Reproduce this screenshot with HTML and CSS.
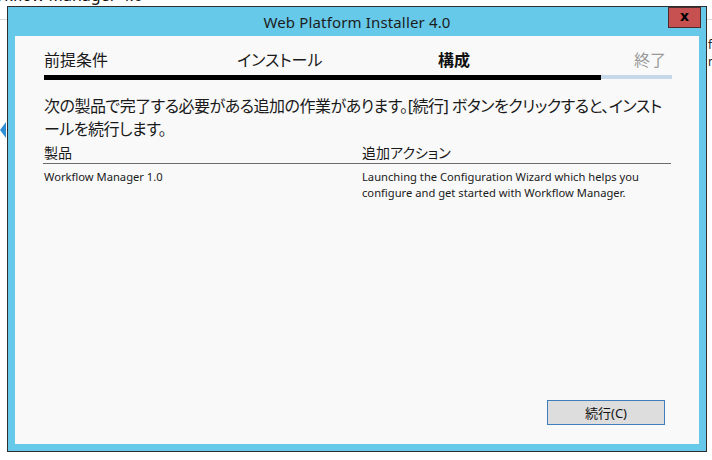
FILE: index.html
```html
<!DOCTYPE html>
<html lang="ja">
<head>
<meta charset="utf-8">
<title>Web Platform Installer 4.0</title>
<link rel="stylesheet" href="styles.css">
</head>
<body>
<div class="desktop">
  <div class="bg-rule"></div>
  <div class="bg-title">Workflow Manager 4.0</div>
  <div class="bg-side"><span>fl</span><span>m</span></div>
  <div class="bg-arrow"></div>

  <div class="window">
    <div class="titlebar">
      <span class="title">Web Platform Installer 4.0</span>
      <button class="close" type="button">x</button>
    </div>
    <div class="panel">
      <div class="steps">
        <div class="step-labels">
          <span>前提条件</span>
          <span>インストール</span>
          <span class="current">構成</span>
          <span class="todo">終了</span>
        </div>
        <div class="progress">
          <div class="done"></div>
          <div class="rest"></div>
        </div>
      </div>

      <p class="message">次の製品で完了する必要がある追加の作業があります。[続行] ボタンをクリックすると、インストールを続行します。</p>

      <div class="table">
        <div class="thead">
          <span>製品</span>
          <span>追加アクション</span>
        </div>
        <div class="row">
          <span>Workflow Manager 1.0</span>
          <span>Launching the Configuration Wizard which helps you configure and get started with Workflow Manager.</span>
        </div>
      </div>

      <div class="footer">
        <button class="btn" type="button">続行(C)</button>
      </div>
    </div>
  </div>
</div>
</body>
</html>
```

FILE: styles.css
```css
* { box-sizing: border-box; }

html, body {
  margin: 0;
  padding: 0;
  background: #ffffff;
}

body {
  font-family: "Noto Sans", "Noto Sans CJK JP", sans-serif;
  color: #1a1a1a;
}

.desktop {
  position: relative;
  width: 712px;
  height: 460px;
  overflow: hidden;
  background: #ffffff;
}

/* desktop behind the dialog */
.bg-rule {
  position: absolute;
  left: 0;
  right: 0;
  top: 19px;
  height: 1px;
  background: #d8d8d8;
}

.bg-title {
  position: absolute;
  right: 569px;
  top: -13px;
  font-size: 16px;
  line-height: 16px;
  white-space: nowrap;
  color: #111;
}

.bg-side {
  position: absolute;
  left: 708px;
  top: 38px;
  display: flex;
  flex-direction: column;
  gap: 3px;
  font-size: 12px;
  line-height: 14px;
  color: #222;
}

.bg-arrow {
  position: absolute;
  left: 0;
  top: 122px;
  width: 0;
  height: 0;
  border-top: 8px solid transparent;
  border-bottom: 8px solid transparent;
  border-right: 6px solid #2f8fd4;
}

/* dialog window */
.window {
  position: absolute;
  left: 7px;
  top: 6px;
  width: 700px;
  height: 446px;
  border: 1px solid #2e2e2e;
  background: #66c9e9;
  padding: 0 7px 7px;
  display: flex;
  flex-direction: column;
}

.titlebar {
  position: relative;
  height: 29px;
  display: flex;
  align-items: center;
  justify-content: center;
}

.title {
  font-size: 15px;
  color: #1c1c1c;
  letter-spacing: 0.15px;
}

.close {
  position: absolute;
  right: -2px;
  top: 0;
  width: 33px;
  height: 21px;
  margin: 0;
  padding: 0 0 3px;
  border: 1px solid #4a2c2c;
  background: #c75050;
  color: #000;
  font-family: "DejaVu Sans", sans-serif;
  font-weight: bold;
  font-size: 14px;
  line-height: 14px;
}

.panel {
  height: 408px;
  background: #f9f9f9;
  padding: 0 27px 0 29px;
  display: flex;
  flex-direction: column;
}

/* wizard steps */
.steps {
  padding-top: 14px;
}

.step-labels {
  display: grid;
  grid-template-columns: 193px 201px 196px 1fr;
  font-size: 16px;
  line-height: 20px;
  height: 20px;
  color: #1a1a1a;
  font-feature-settings: "palt";
}

.step-labels .current {
  font-weight: bold;
  color: #111;
}

.step-labels .todo {
  color: #9a9a9a;
}

.progress {
  margin-top: 5px;
  display: flex;
  align-items: flex-start;
}

.progress .done {
  width: 557px;
  height: 5px;
  background: #000;
}

.progress .rest {
  flex: 1;
  height: 4px;
  background: #c6d9ea;
}

.message {
  margin: 15px 0 0;
  font-size: 16px;
  line-height: 23px;
  letter-spacing: -0.5px;
  font-feature-settings: "palt";
  color: #1a1a1a;
}

/* product table */
.table {
  margin: 3px 1px 0 -1px;
}

.thead,
.row {
  display: grid;
  grid-template-columns: 318px 1fr;
}

.thead {
  font-size: 14px;
  line-height: 18px;
  padding-bottom: 1px;
  border-bottom: 1px solid #6b6b6b;
  font-feature-settings: "palt";
}

.thead span,
.row span {
  padding-left: 1px;
}

.row {
  padding-top: 5px;
  font-size: 11.2px;
  line-height: 16px;
  color: #1a1a1a;
}

.row span:last-child {
  padding-right: 24px;
}

.footer {
  margin-top: auto;
  display: flex;
  justify-content: flex-end;
  padding-bottom: 19px;
}

.btn {
  width: 118px;
  height: 25px;
  margin: 0 7px 0 0;
  padding: 0;
  border: 1px solid #3d7ebb;
  background: #dddddd;
  font-family: "Noto Sans", "Noto Sans CJK JP", sans-serif;
  font-size: 13px;
  color: #111;
}
```
